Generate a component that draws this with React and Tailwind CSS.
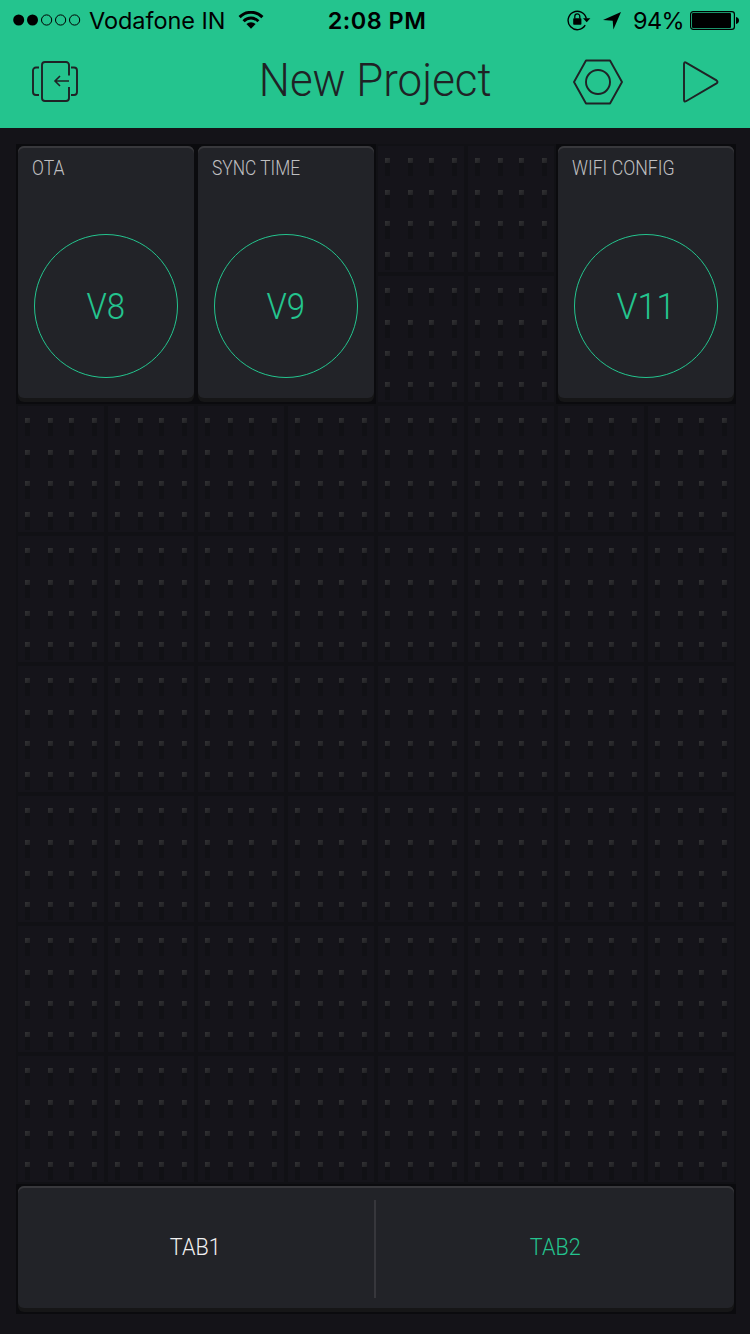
const COLS = 8;
const ROWS = 8;

const WIDGETS = [
  { title: 'OTA', pin: 'V8', place: 'col-start-1', from: 0, titleFit: 'scale-x-[0.9]', pinFit: 'scale-x-[0.89]' },
  { title: 'SYNC TIME', pin: 'V9', place: 'col-start-3', from: 2, titleFit: 'scale-x-[0.89]', pinFit: 'scale-x-[0.89]' },
  { title: 'WIFI CONFIG', pin: 'V11', place: 'col-start-7', from: 6, titleFit: 'scale-x-[0.91]', pinFit: 'scale-x-[0.92]' },
];

const COL_START = ['col-start-1', 'col-start-2', 'col-start-3', 'col-start-4', 'col-start-5', 'col-start-6', 'col-start-7', 'col-start-8'];
const ROW_START = ['row-start-1', 'row-start-2', 'row-start-3', 'row-start-4', 'row-start-5', 'row-start-6', 'row-start-7', 'row-start-8'];

const isCovered = (col, row) =>
  row < 2 && WIDGETS.some((w) => col === w.from || col === w.from + 1);

function StatusBar() {
  return (
    <div className="grid h-10 grid-cols-[1fr_auto_1fr] items-center pl-[13px] pr-[11px] font-['Inter','Liberation_Sans',sans-serif] text-[23.5px] leading-[38px] text-black">
      <div className="flex items-center">
        <svg width="68" height="12" viewBox="0 0 68 12" className="shrink-0">
          <circle cx="5.7" cy="6" r="5.5" />
          <circle cx="19.5" cy="6" r="5.5" />
          <g fill="none" stroke="#000" strokeWidth="1">
            <circle cx="33.6" cy="6" r="5.1" />
            <circle cx="47.6" cy="6" r="5.1" />
            <circle cx="61.6" cy="6" r="5.1" />
          </g>
        </svg>
        <span className="ml-2 w-[149px] whitespace-nowrap pt-0.5 tracking-[-0.05px]">Vodafone IN</span>
        <svg width="26" height="18" viewBox="0 0 26 18" className="shrink-0">
          <g fill="none" stroke="#000" strokeWidth="3">
            <path d="M1.6 6.1 A16 16 0 0 1 24.4 6.1" />
            <path d="M5.6 10.2 A10.4 10.4 0 0 1 20.4 10.2" />
          </g>
          <path d="M8.4 13.1 A6.5 6.5 0 0 1 17.6 13.1 L13 17.7 Z" />
        </svg>
      </div>
      <span className="whitespace-nowrap pl-[2px] pt-0.5 font-semibold tracking-[0.45px]">2:08 PM</span>
      <div className="flex items-center justify-end">
        <svg width="24" height="22" viewBox="0 0 24 22" className="mr-[12px]">
          <path d="M18.2 16.2 A9.2 9.2 0 1 1 19.3 9.5" fill="none" stroke="#000" strokeWidth="1.4" />
          <path d="M16 9.3 H23.4 L19.7 13.2 Z" />
          <rect x="6.2" y="9.3" width="8.2" height="6.4" rx="0.8" />
          <path d="M7.8 9.5 V7.4 A2.5 2.5 0 0 1 12.8 7.4 V9.5" fill="none" stroke="#000" strokeWidth="1.3" />
        </svg>
        <svg width="18" height="18" viewBox="0 0 18 18" className="mr-[12px] mt-0.5">
          <path d="M18 0 L10.4 17.6 L9.7 8.8 L0 8 Z" />
        </svg>
        <span className="mr-[6px] whitespace-nowrap pt-0.5 tracking-[-0.6px]">94%</span>
        <svg width="49" height="19" viewBox="0 0 49 19">
          <rect x="0.6" y="0.6" width="43.8" height="17.8" rx="2.6" fill="none" stroke="#000" strokeWidth="1.2" />
          <rect x="2" y="2" width="39" height="15" rx="1" />
          <path d="M46 6 Q49 6.8 49 9.5 Q49 12.2 46 13 Z" />
        </svg>
      </div>
    </div>
  );
}

function Toolbar() {
  return (
    <div className="grid h-[88px] grid-cols-[228px_294px_228px] items-center pb-[5px]">
      <svg width="48" height="42" viewBox="0 0 48 42" className="ml-8 mt-px" fill="none" stroke="#1f2225" strokeWidth="1.9">
        <path d="M37 14.5 V4 A3 3 0 0 0 34 1 H13 A3 3 0 0 0 10 4 V37 A3 3 0 0 0 13 40 H34 A3 3 0 0 0 37 37 V26" />
        <path d="M7 6.5 H4 A3 3 0 0 0 1 9.5 V31 A3 3 0 0 0 4 34 H7" />
        <path d="M39 6.5 H42 A3 3 0 0 1 45 9.5 V31 A3 3 0 0 1 42 34 H39" />
        <path d="M37 20 H23 M28 15 L23 20 L28 25" strokeWidth="1.6" />
      </svg>
      <h1 className="scale-x-[0.952] justify-self-center whitespace-nowrap pb-[3px] text-[46px] font-light leading-none text-[#1f2225]">New Project</h1>
      <div className="flex items-center gap-[58px] pl-[50px]">
        <svg width="52" height="46" viewBox="0 0 52 46" fill="none" stroke="#1f2225" strokeWidth="1.9" className="shrink-0">
          <path d="M14 1.5 H38 L50 23 L38 44.5 H14 L2 23 Z" strokeLinejoin="round" />
          <circle cx="26" cy="23" r="12" />
        </svg>
        <svg width="37" height="42" viewBox="0 0 37 42" fill="none" stroke="#1f2225" strokeWidth="1.9" className="shrink-0">
          <path d="M2 3 Q2 0.6 4 1.6 L34.5 19.4 Q36.5 21 34.5 22.4 L4 40.2 Q2 41.2 2 38.8 Z" />
        </svg>
      </div>
    </div>
  );
}

function Pin() {
  return (
    <div className="h-[18px] w-[5px] bg-[#111115]">
      <div className="h-[5px] bg-linear-to-br from-[#333335] to-[#202023]" />
    </div>
  );
}

function Cell({ place }) {
  return (
    <div className={`${place} grid grid-cols-[23px_21px_23px_5px] grid-rows-[32px_31px_31px_18px] border-2 border-[#111115] bg-[#15141a] pl-[7px] pt-3`}>
      {Array.from({ length: 16 }, (_, i) => (
        <Pin key={i} />
      ))}
    </div>
  );
}

function Panel({ className, children }) {
  return (
    <div className={`${className} bg-[#0b0b0e] p-0.5`}>
      <div className="h-full rounded-[6px] bg-[#161617] pb-1">
        <div className="h-full overflow-hidden rounded-[6px] bg-[#222328] shadow-[inset_0_2px_0_#38383c]">{children}</div>
      </div>
    </div>
  );
}

function Widget({ title, pin, place, titleFit, pinFit }) {
  return (
    <Panel className={`${place} col-span-2 row-start-1 row-span-2`}>
      <div className="flex h-full flex-col justify-between px-[14px] pb-5 pt-[13px]">
        <span className={`${titleFit} origin-left self-start whitespace-nowrap text-[19.5px] font-[350] leading-5 text-[#c0c0c2]`}>{title}</span>
        <div className="ml-[2px] flex size-36 items-center justify-center rounded-full border border-[#24c48e]">
          <span className={`${pinFit} text-[37px] font-[350] leading-none text-[#24c48e]`}>{pin}</span>
        </div>
      </div>
    </Panel>
  );
}

export default function App() {
  const cells = [];
  for (let row = 0; row < ROWS; row++) {
    for (let col = 0; col < COLS; col++) {
      if (!isCovered(col, row)) {
        cells.push(<Cell key={`${col}-${row}`} place={`${COL_START[col]} ${ROW_START[row]}`} />);
      }
    }
  }

  return (
    <div className="flex h-[1334px] w-[750px] flex-col overflow-hidden bg-[#141318] font-['Roboto','Liberation_Sans',sans-serif]">
      <header className="h-32 shrink-0 bg-[#24c48e]">
        <StatusBar />
        <Toolbar />
      </header>
      <main className="ml-4 mt-4 w-[720px]">
        <div className="grid grid-cols-[repeat(8,90px)] grid-rows-[repeat(8,130px)]">
          {cells}
          {WIDGETS.map((w) => (
            <Widget key={w.pin} {...w} />
          ))}
        </div>
        <Panel className="h-[130px]">
          <nav className="grid h-full grid-cols-[356px_2px_358px] items-center text-2xl font-[350]">
            <button className="flex justify-center pr-px text-[#f0f0f1]">
              <span className="scale-x-[0.9]">TAB1</span>
            </button>
            <div className="mt-1 h-[98px] bg-[#37373c]" />
            <button className="flex justify-center text-[#24c48e]">
              <span className="scale-x-[0.9]">TAB2</span>
            </button>
          </nav>
        </Panel>
      </main>
    </div>
  );
}
